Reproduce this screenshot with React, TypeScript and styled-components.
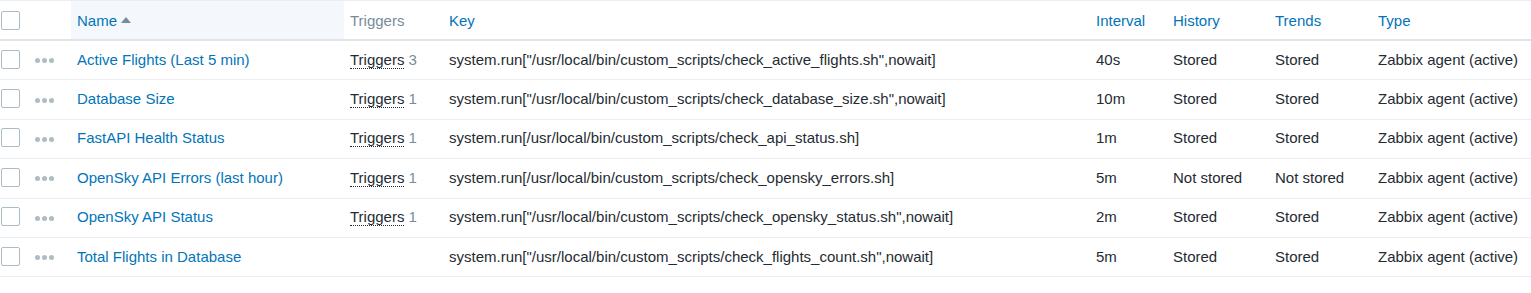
import React from "react";
import styled, { createGlobalStyle } from "styled-components";

const Global = createGlobalStyle`
  html, body { margin: 0; padding: 0; background: #ffffff; }
  body { font-family: "Liberation Sans", Arial, sans-serif; font-size: 15px; color: #1f2c33; }
`;

const Table = styled.table`
  width: 1531px;
  table-layout: fixed;
  border-collapse: separate;
  border-spacing: 0;
`;

const Th = styled.th<{ $sorted?: boolean; $pad?: number }>`
  box-sizing: border-box;
  height: 41px;
  padding: 0 0 0 ${(p) => (p.$pad ?? 6)}px;
  text-align: left;
  font-weight: normal;
  vertical-align: middle;
  border-top: 1px solid #ebeef0;
  border-bottom: 2px solid #dfe4e7;
  background: ${(p) => (p.$sorted ? "#f4f8fc" : "transparent")};
  white-space: nowrap;
`;

const Td = styled.td<{ $pad?: number }>`
  box-sizing: border-box;
  height: 39.4px;
  padding: 0 0 2px ${(p) => (p.$pad ?? 6)}px;
  vertical-align: middle;
  border-bottom: 1px solid #ebeef0;
  white-space: nowrap;
  overflow: hidden;
`;

const HeadLink = styled.span`
  color: #0275b8;
  display: inline-flex;
  align-items: center;
`;

const HeadMuted = styled.span`
  color: #768d99;
`;

const SortArrow = styled.span`
  display: inline-block;
  width: 0;
  height: 0;
  margin-left: 4px;
  margin-top: -1px;
  border-left: 5px solid transparent;
  border-right: 5px solid transparent;
  border-bottom: 6px solid #768d99;
`;

const Box = styled.span`
  display: block;
  box-sizing: border-box;
  width: 19px;
  height: 19px;
  border: 1px solid #acbbc4;
  border-radius: 2px;
  background: #fff;
`;

const Dots = styled.span`
  display: inline-flex;
  gap: 2px;
  vertical-align: middle;
  & > i {
    display: block;
    width: 5px;
    height: 5px;
    border-radius: 50%;
    background: #b0bcc4;
  }
`;

const NameLink = styled.span`
  color: #0275b8;
`;

const TriggerLink = styled.span`
  color: #1f2c33;
  border-bottom: 1px dotted #1f2c33;
`;

const Count = styled.span`
  color: #768d99;
  margin-left: 4px;
`;

type Item = {
  name: string;
  triggers?: number;
  key: string;
  interval: string;
  history: string;
  trends: string;
};

const items: Item[] = [
  {
    name: "Active Flights (Last 5 min)",
    triggers: 3,
    key: 'system.run["/usr/local/bin/custom_scripts/check_active_flights.sh",nowait]',
    interval: "40s",
    history: "Stored",
    trends: "Stored",
  },
  {
    name: "Database Size",
    triggers: 1,
    key: 'system.run["/usr/local/bin/custom_scripts/check_database_size.sh",nowait]',
    interval: "10m",
    history: "Stored",
    trends: "Stored",
  },
  {
    name: "FastAPI Health Status",
    triggers: 1,
    key: "system.run[/usr/local/bin/custom_scripts/check_api_status.sh]",
    interval: "1m",
    history: "Stored",
    trends: "Stored",
  },
  {
    name: "OpenSky API Errors (last hour)",
    triggers: 1,
    key: "system.run[/usr/local/bin/custom_scripts/check_opensky_errors.sh]",
    interval: "5m",
    history: "Not stored",
    trends: "Not stored",
  },
  {
    name: "OpenSky API Status",
    triggers: 1,
    key: 'system.run["/usr/local/bin/custom_scripts/check_opensky_status.sh",nowait]',
    interval: "2m",
    history: "Stored",
    trends: "Stored",
  },
  {
    name: "Total Flights in Database",
    key: 'system.run["/usr/local/bin/custom_scripts/check_flights_count.sh",nowait]',
    interval: "5m",
    history: "Stored",
    trends: "Stored",
  },
];

const widths = [29, 42, 273, 99, 647, 77, 102, 103, 159];

export default function App() {
  return (
    <>
      <Global />
      <Table>
        <colgroup>
          {widths.map((w, i) => (
            <col key={i} style={{ width: w }} />
          ))}
        </colgroup>
        <thead>
          <tr>
            <Th $pad={1}>
              <Box />
            </Th>
            <Th />
            <Th $sorted>
              <HeadLink>
                Name
                <SortArrow />
              </HeadLink>
            </Th>
            <Th>
              <HeadMuted>Triggers</HeadMuted>
            </Th>
            <Th>
              <HeadLink>Key</HeadLink>
            </Th>
            <Th>
              <HeadLink>Interval</HeadLink>
            </Th>
            <Th>
              <HeadLink>History</HeadLink>
            </Th>
            <Th>
              <HeadLink>Trends</HeadLink>
            </Th>
            <Th>
              <HeadLink>Type</HeadLink>
            </Th>
          </tr>
        </thead>
        <tbody>
          {items.map((it) => (
            <tr key={it.name}>
              <Td $pad={1}>
                <Box />
              </Td>
              <Td>
                <Dots>
                  <i />
                  <i />
                  <i />
                </Dots>
              </Td>
              <Td>
                <NameLink>{it.name}</NameLink>
              </Td>
              <Td>
                {it.triggers !== undefined && (
                  <>
                    <TriggerLink>Triggers</TriggerLink>
                    <Count>{it.triggers}</Count>
                  </>
                )}
              </Td>
              <Td>{it.key}</Td>
              <Td>{it.interval}</Td>
              <Td>{it.history}</Td>
              <Td>{it.trends}</Td>
              <Td>Zabbix agent (active)</Td>
            </tr>
          ))}
        </tbody>
      </Table>
    </>
  );
}
